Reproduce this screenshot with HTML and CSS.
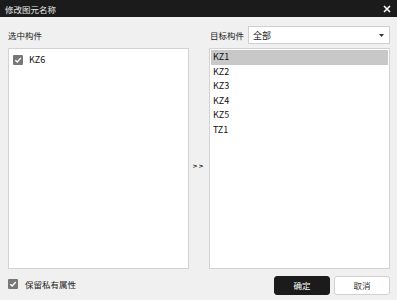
FILE: index.html
```html
<!DOCTYPE html>
<html>
<head>
<meta charset="utf-8">
<link rel="stylesheet" href="styles.css">
</head>
<body>
<div class="dialog">
  <div class="titlebar">
    <span class="title">修改图元名称</span>
    <svg class="close" width="8" height="8" viewBox="0 0 8 8"><path d="M1 1L7 7M7 1L1 7" stroke="#fff" stroke-width="1.6"/></svg>
  </div>
  <div class="main">
    <div class="col">
      <div class="head"><span class="label">选中构件</span></div>
      <div class="list">
        <div class="item check-item">
          <span class="cb"><svg width="10" height="10" viewBox="0 0 10 10"><path d="M2.3 5.2L4.2 7L7.8 3" stroke="#fff" stroke-width="1.4" fill="none"/></svg></span>
          <span>KZ6</span>
        </div>
      </div>
    </div>
    <div class="mid"><span class="arrows">&gt;&gt;</span></div>
    <div class="col">
      <div class="head">
        <span class="label">目标构件</span>
        <div class="select"><span>全部</span><svg width="5" height="3" viewBox="0 0 5 3"><path d="M0 0H5L2.5 3Z" fill="#333"/></svg></div>
      </div>
      <div class="list">
        <div class="item sel">KZ1</div>
        <div class="item">KZ2</div>
        <div class="item">KZ3</div>
        <div class="item">KZ4</div>
        <div class="item">KZ5</div>
        <div class="item">TZ1</div>
      </div>
    </div>
  </div>
  <div class="footer">
    <div class="keep">
      <span class="cb"><svg width="10" height="10" viewBox="0 0 10 10"><path d="M2.3 5.2L4.2 7L7.8 3" stroke="#fff" stroke-width="1.4" fill="none"/></svg></span>
      <span>保留私有属性</span>
    </div>
    <div class="buttons">
      <button class="btn ok">确定</button>
      <button class="btn cancel">取消</button>
    </div>
  </div>
</div>
</body>
</html>
```
FILE: styles.css
```css
* { box-sizing: border-box; }
html, body { margin: 0; padding: 0; }
body {
  width: 397px;
  height: 300px;
  overflow: hidden;
  background: #f0f0f0;
  font-family: "Noto Sans CJK SC", "Noto Sans", sans-serif;
  font-size: 8.5px;
  color: #222;
}
.dialog { width: 397px; height: 300px; display: flex; flex-direction: column; }
.titlebar {
  height: 17px;
  background: #1b1b1b;
  color: #e8e8e8;
  display: flex;
  align-items: center;
  justify-content: space-between;
  padding: 0 6px 0 5px;
}
.title { font-size: 8.5px; }
.main {
  display: flex;
  padding: 0 7px 0 8px;
}
.col { width: 181px; display: flex; flex-direction: column; }
.mid { width: 20px; display: flex; align-items: center; justify-content: center; padding-top: 44px; padding-right: 1px; }
.arrows { font-size: 6px; font-weight: bold; letter-spacing: 1px; color: #222; font-family: "DejaVu Sans", sans-serif; }
.head {
  height: 31px;
  padding-top: 9px;
  padding-bottom: 4px;
  display: flex;
  align-items: center;
}
.col:last-child .head { padding-left: 1px; }
.label { color: #222; }
.select {
  margin-left: 4px;
  flex: 1;
  height: 18px;
  background: #fff;
  border: 1px solid #cfcfcf;
  display: flex;
  align-items: center;
  justify-content: space-between;
  padding: 0 5px 0 4px;
  font-size: 9px;
}
.list {
  height: 221px;
  background: #fff;
  border: 1px solid #d2d2d2;
  padding: 1px;
}
.item {
  height: 14.6px;
  line-height: 14.6px;
  padding-left: 2px;
  color: #111;
  font-size: 9px;
}
.item.sel { background: #c8c8c8; }
.check-item { display: flex; align-items: center; gap: 6px; padding-left: 3px; margin-top: 3px; }
.cb {
  width: 10px; height: 10px;
  background: #777;
  border-radius: 1px;
  display: inline-flex;
}
.footer {
  flex: 1;
  display: flex;
  align-items: center;
  justify-content: space-between;
  padding: 0 7px 0 8px;
}
.keep { display: flex; align-items: center; gap: 7px; margin-top: -1px; }
.buttons { display: flex; gap: 4px; margin-top: 1px; }
.btn {
  width: 56px;
  height: 19px;
  font-family: "Noto Sans CJK SC", sans-serif;
  font-size: 8.5px;
  border-radius: 3px;
  padding: 0;
}
.ok { background: #1b1b1b; color: #fff; border: 1px solid #1b1b1b; }
.cancel { background: #fff; color: #333; border: 1px solid #d0d0d0; }
```
